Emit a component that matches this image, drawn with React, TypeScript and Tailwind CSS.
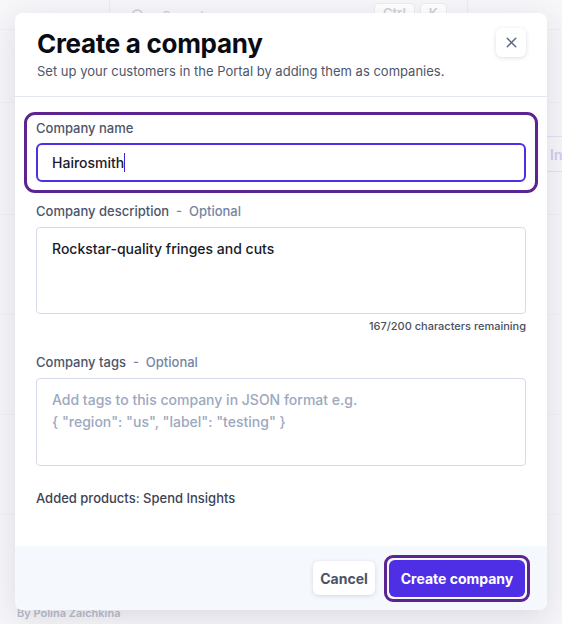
import { X, Search } from "lucide-react";

const font = { fontFamily: "Inter, 'Noto Sans', sans-serif" };

function Backdrop() {
  return (
    <div className="h-[624px] w-full bg-[#f7f7fa] flex flex-col">
      {/* top bar */}
      <div className="flex h-[30px] border-b border-[#efeff4]">
        <div className="w-[110px] border-r border-[#ececf2]" />
        <div className="flex w-[358px] items-start gap-2 border-r border-[#ececf2] px-5 pt-[3px]">
          <Search className="mt-[5px] h-4 w-4 text-[#c9cbd3]" />
          <span className="ml-2 mt-[3px] text-[14px] text-[#cfd1d8]">Search</span>
          <div className="ml-auto flex gap-[5px]">
            <span className="rounded border border-[#ececf1] bg-white px-2 text-[13px] font-semibold text-[#cfd1d8]">
              Ctrl
            </span>
            <span className="rounded border border-[#ececf1] bg-white px-2 text-[13px] font-semibold text-[#cfd1d8]">
              K
            </span>
          </div>
        </div>
      </div>
      <div className="flex flex-1 flex-col">
        <div className="h-[73px] border-b border-[#f0f0f4]" />
        <div className="flex h-[112px] justify-end border-b border-[#f0f0f4] pt-[33px]">
          <div className="flex h-[36px] w-[20px] items-center border-y border-[#e4e1f6] pl-[8px] text-[14px] font-semibold text-[#d0ccf2]">
            In
          </div>
        </div>
        <div className="h-[100px] border-b border-[#f2f2f5]" />
        <div className="h-[100px] border-b border-[#f2f2f5]" />
        <div className="h-[100px] border-b border-[#f2f2f5]" />
        <div className="flex flex-1 items-end justify-between px-[17px] pb-[3px]">
          <span className="text-[11px] font-semibold text-[#babdc8]">By Polina Zaichkina</span>
        </div>
      </div>
    </div>
  );
}

function Label({ text, optional }: { text: string; optional?: boolean }) {
  return (
    <div className="text-[13px] leading-[18px] font-medium text-[#4c5569]">
      {text}
      {optional && <span className="text-[#7585a3]">&nbsp; - &nbsp;Optional</span>}
    </div>
  );
}

export default function App() {
  return (
    <div className="relative h-[624px] w-[562px] overflow-hidden" style={font}>
      <Backdrop />
      <div className="absolute left-[15px] top-[13px] flex h-[597px] w-[532px] flex-col overflow-hidden rounded-lg bg-white shadow-[0_8px_30px_rgba(40,40,80,0.14)]">
        {/* Header */}
        <div className="relative border-b border-[#e3e8f0] px-[22px] pb-[16px] pt-[15px]">
          <h2 className="text-[26px] leading-[32px] font-bold tracking-[-0.3px] text-[#0b0b14]">
            Create a company
          </h2>
          <p className="mt-[2px] text-[13px] leading-[18px] text-[#4d566a]">
            Set up your customers in the Portal by adding them as companies.
          </p>
          <button className="absolute right-[21px] top-[15px] flex h-[29px] w-[30px] items-center justify-center rounded-md bg-white shadow-[0_1px_4px_rgba(60,70,110,0.18)]">
            <X className="h-[17px] w-[17px] text-[#5b6780]" strokeWidth={2} />
          </button>
        </div>

        {/* Body */}
        <div className="flex flex-1 flex-col px-[21px] pt-[15px]">
          <div className="-mx-[12px] rounded-[11px] border-[3px] border-[#5d2390] px-[9px] pb-[8px] pt-[4px]">
            <Label text="Company name" />
            <div className="mt-[6px] flex h-[39px] items-center rounded-[6px] border-2 border-[#4c30e6] px-[14px]">
              <span className="text-[14px] font-medium text-[#191a2a]">Hairosmith</span>
              <span className="h-[19px] w-px bg-[#3b22d8]" />
            </div>
          </div>

          <div className="mt-[9px]">
            <Label text="Company description" optional />
          </div>
          <div className="mt-[7px] h-[87px] rounded-[4px] border border-[#d5dbe8] px-[15px] pt-[8px]">
            <span className="text-[14px] leading-[20px] font-medium text-[#191a2a]">
              Rockstar-quality fringes and cuts
            </span>
          </div>
          <div className="mt-[4px] text-right text-[11px] leading-[16px] font-medium text-[#4a5060]">
            167/200 characters remaining
          </div>

          <div className="mt-[19px]">
            <Label text="Company tags" optional />
          </div>
          <div className="mt-[7px] h-[88px] rounded-[4px] border border-[#d5dbe8] px-[15px] pt-[10px] text-[14px] leading-[22px] font-medium text-[#9ca8be]">
            <div>Add tags to this company in JSON format e.g.</div>
            <div>{'{ "region": "us", "label": "testing" }'}</div>
          </div>

          <div className="mt-[23px] text-[13px] leading-[18px] font-medium text-[#3c4354]">
            Added products: Spend Insights
          </div>
        </div>

        {/* Footer */}
        <div className="flex h-[64px] items-center justify-end gap-[9px] bg-[#f5f8fc] pr-[17px]">
          <button className="h-[34px] w-[62px] rounded-md bg-white text-[14px] font-bold text-[#4a5468] shadow-[0_1px_4px_rgba(60,70,110,0.18)]">
            Cancel
          </button>
          <div className="rounded-[9px] border-[3px] border-[#5d2390] p-[2px]">
            <button className="h-[37px] w-[136px] rounded-md bg-[#4f2fe6] text-[14px] font-bold text-white">
              Create company
            </button>
          </div>
        </div>
      </div>
    </div>
  );
}
